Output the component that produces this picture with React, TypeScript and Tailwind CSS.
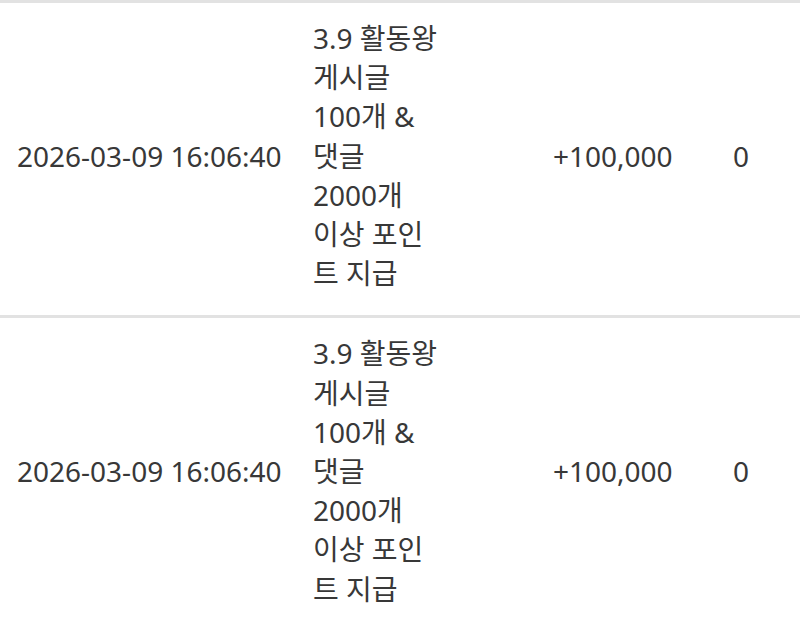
import React from 'react';

interface PointRow {
  date: string;
  desc: string[];
  amount: string;
  balance: string;
}

// description is shown in a narrow column, wrapped the same way as the source page
const descLines = ['3.9 활동왕', '게시글', '100개 &', '댓글', '2000개', '이상 포인', '트 지급'];

const rows: PointRow[] = [
  { date: '2026-03-09 16:06:40', desc: descLines, amount: '+100,000', balance: '0' },
  { date: '2026-03-09 16:06:40', desc: descLines, amount: '+100,000', balance: '0' },
];

export default function App() {
  return (
    <div
      className="w-[800px] h-[624px] overflow-hidden bg-white text-[#383838] text-[28px] leading-[39.2px]"
      style={{ fontFamily: '"Noto Sans", "Noto Sans CJK KR", sans-serif' }}
    >
      {rows.map((row, i) => (
        <div key={i} className="flex items-center border-t-[3px] border-[#e2e2e2] pt-[16px] pb-[22px]">
          <div className="w-[313px] shrink-0 pl-[17px] whitespace-nowrap">{row.date}</div>
          <div className="w-[130px] shrink-0 flex flex-col">
            {row.desc.map((line, j) => (
              <span key={j} className="whitespace-nowrap">{line}</span>
            ))}
          </div>
          <div className="w-[110px] shrink-0" />
          <div className="w-[180px] shrink-0 whitespace-nowrap">{row.amount}</div>
          <div className="whitespace-nowrap">{row.balance}</div>
        </div>
      ))}
    </div>
  );
}
